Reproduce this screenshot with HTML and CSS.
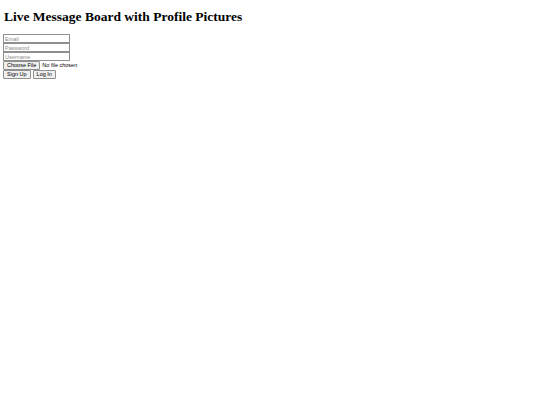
FILE: index.html
```html
<!DOCTYPE html>
<html>
<head>
<meta charset="utf-8">
<title>Live Message Board</title>
<link rel="stylesheet" href="styles.css">
</head>
<body>
<h1 class="title">Live Message Board with Profile Pictures</h1>
<div class="auth">
  <input class="field" type="email" placeholder="Email">
  <input class="field" type="password" placeholder="Password">
  <input class="field" type="text" placeholder="Username">
  <div class="file-row">
    <span class="btn">Choose File</span>
    <span class="file-note">No file chosen</span>
  </div>
  <div class="btn-row">
    <button class="btn">Sign Up</button>
    <button class="btn">Log In</button>
  </div>
</div>
</body>
</html>
```
FILE: styles.css
```css
html, body {
  background: #ffffff;
}
body {
  margin: 4px 3px;
  font-family: "Liberation Sans", Arial, sans-serif;
  color: #000;
}
.title {
  font-family: "Liberation Serif", "Times New Roman", serif;
  font-size: 13.5px;
  font-weight: bold;
  line-height: 16px;
  margin: 5px 0 9px 1px;
}
.auth {
  display: flex;
  flex-direction: column;
  align-items: flex-start;
}
.field {
  box-sizing: border-box;
  width: 67px;
  height: 9px;
  margin: 0;
  padding: 0 1px;
  border: 1px solid #8f8f8f;
  border-radius: 0;
  font-family: "Liberation Sans", Arial, sans-serif;
  font-size: 5.5px;
  line-height: 7px;
  color: #000;
  outline: none;
}
.field::placeholder {
  color: #8a8a8a;
}
.file-row {
  display: flex;
  align-items: center;
  gap: 2px;
  height: 9px;
}
.file-note {
  font-size: 5.5px;
  line-height: 9px;
}
.btn-row {
  display: flex;
  gap: 2px;
}
.btn {
  box-sizing: border-box;
  display: inline-flex;
  align-items: center;
  height: 9px;
  margin: 0;
  padding: 0 3px;
  border: 1px solid #8f8f8f;
  border-radius: 1px;
  background: #efefef;
  font-family: "Liberation Sans", Arial, sans-serif;
  font-size: 5.5px;
  line-height: 7px;
  color: #000;
}
```
